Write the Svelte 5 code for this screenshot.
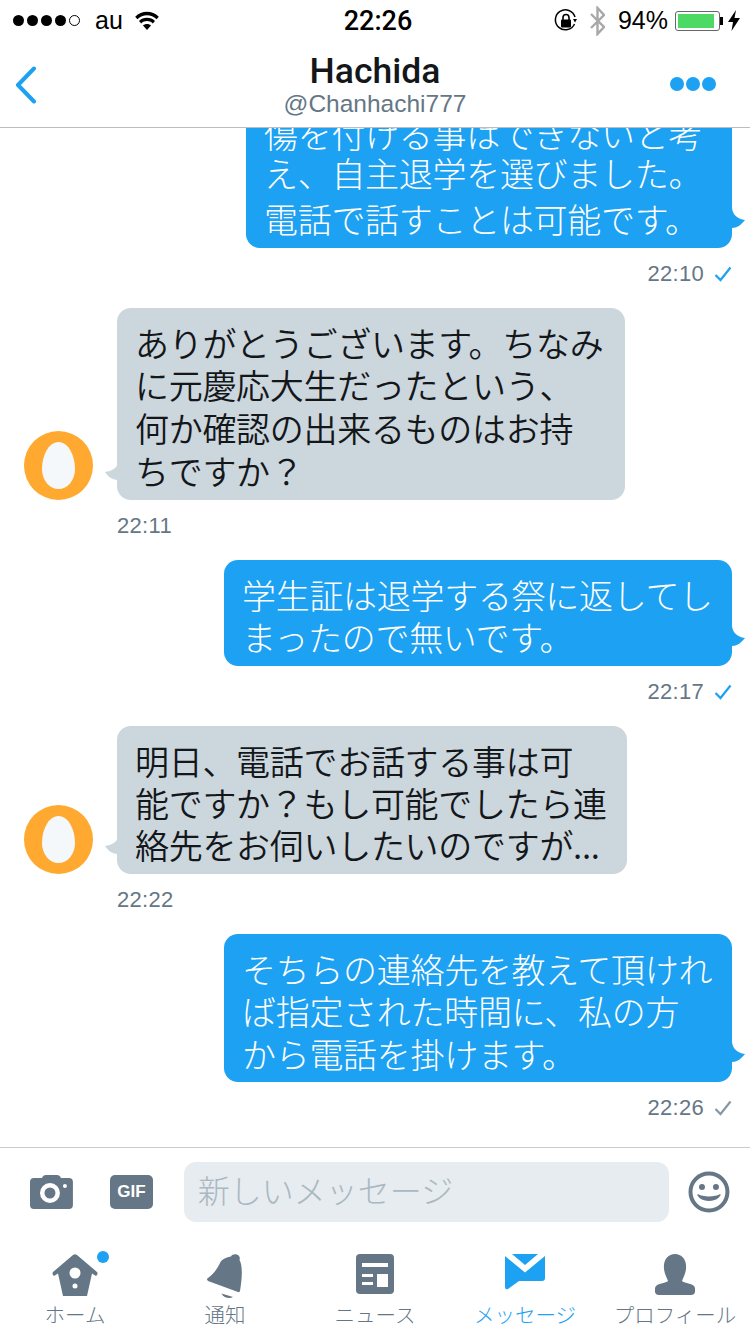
<script>
  const messages = [
    { id: 1, me: true, time: '22:10', read: true, width: 486, tight: true, lines: ['傷を付ける事はできないと考', 'え、自主退学を選びました。', '電話で話すことは可能です。'] },
    { id: 2, me: false, time: '22:11', width: 508, lines: ['ありがとうございます。ちなみ', 'に元慶応大生だったという、', '何か確認の出来るものはお持', 'ちですか？'] },
    { id: 3, me: true, time: '22:17', read: true, width: 508, lines: ['学生証は退学する祭に返してし', 'まったので無いです。'] },
    { id: 4, me: false, time: '22:22', width: 510, lines: ['明日、電話でお話する事は可', '能ですか？もし可能でしたら連', '絡先をお伺いしたいのですが...'] },
    { id: 5, me: true, time: '22:26', read: false, width: 508, lines: ['そちらの連絡先を教えて頂けれ', 'ば指定された時間に、私の方', 'から電話を掛けます。'] }
  ];
</script>

<div class="screen">
  <div class="status">
    <div class="status-left">
      <span class="signal">
        <i class="dot"></i><i class="dot"></i><i class="dot"></i><i class="dot"></i><i class="dot empty"></i>
      </span>
      <span class="carrier">au</span>
      <svg width="24" height="19" viewBox="0 0 24 19"><path d="M12 19 L8 14.5 C10 12.5 14 12.5 16 14.5 Z M6.2 12.4 L4 10 C8 5.8 16 5.8 20 10 L17.8 12.4 C14.5 9.3 9.5 9.3 6.2 12.4 Z M2.4 8.2 L0.2 5.8 C6.5 -0.8 17.5 -0.8 23.8 5.8 L21.6 8.2 C16.2 2.9 7.8 2.9 2.4 8.2 Z" fill="#000"/></svg>
    </div>
    <div class="clock">22:26</div>
    <div class="status-right">
      <svg width="24" height="24" viewBox="0 0 24 24"><path d="M20.5 15 A10 10 0 1 1 21 8" fill="none" stroke="#000" stroke-width="1.5"/><path d="M23 10 L19 10 L21 13.5 Z" fill="#000"/><rect x="7" y="10.5" width="10" height="8" rx="1" fill="#000"/><path d="M9 11 V8.5 a3 3 0 0 1 6 0 V11" fill="none" stroke="#000" stroke-width="1.6"/></svg>
      <svg class="bt" width="15" height="30" viewBox="0 0 15 30"><path d="M1 8 L14 21 L7.5 28 V2 L14 9 L1 22" fill="none" stroke="#a8a8a8" stroke-width="2.4"/></svg>
      <span class="pct">94%</span>
      <span class="battery"><span class="charge"></span></span>
      <svg class="bolt" width="12" height="21" viewBox="0 0 12 21"><path d="M8 0 L0 12 H5 L3.5 21 L12 8 H6.5 Z" fill="#000"/></svg>
    </div>
  </div>

  <header class="nav">
    <svg class="back" width="22" height="38" viewBox="0 0 22 38"><path d="M19 2.5 L3 19 L19 35.5" fill="none" stroke="#1da1f2" stroke-width="4" stroke-linecap="round" stroke-linejoin="round"/></svg>
    <div class="title">
      <div class="name">Hachida</div>
      <div class="handle">@Chanhachi777</div>
    </div>
    <div class="more"><i></i><i></i><i></i></div>
  </header>

  <main class="thread">
    {#each messages as m (m.id)}
      <div class="group" class:mine={m.me}>
        <div class="row">
          {#if !m.me}
            <div class="avatar"><span class="egg"></span></div>
          {/if}
          <div class="bubble" class:tight={m.tight} style="width: {m.width}px">
            {#each m.lines as line}
              <div>{line}</div>
            {/each}
            {#if m.me}
              <svg class="tail tail-right" width="13" height="21" viewBox="0 0 13 21"><path d="M0 0 C0 7 5 12 13 13 C9 18 5 21 0 21 Z" fill="#1da1f2"/></svg>
            {:else}
              <svg class="tail tail-left" width="13" height="17" viewBox="0 0 13 17"><path d="M13 0 C12 5 7 8 0 9 C3 14 8 17 13 17 Z" fill="#ccd6dd"/></svg>
            {/if}
          </div>
        </div>
        <div class="meta">
          <span>{m.time}</span>
          {#if m.me}
            <svg width="18" height="16" viewBox="0 0 18 16"><path d="M1.5 9 L6.5 14 L16.5 1.5" fill="none" stroke={m.read ? '#1da1f2' : '#8899a6'} stroke-width="2.2"/></svg>
          {/if}
        </div>
      </div>
    {/each}
  </main>

  <div class="composer">
    <svg width="43" height="34" viewBox="0 0 43 34"><path fill-rule="evenodd" d="M4 3 H12 Q13 0 16 0 H27 Q30 0 31 3 H39 Q43 3 43 7 V30 Q43 34 39 34 H4 Q0 34 0 30 V7 Q0 3 4 3 Z M20 8 A10 10 0 1 0 20 28 A10 10 0 1 0 20 8 Z M20 12.5 A5.5 5.5 0 1 1 20 23.500 A5.500 5.500 0 1 1 20 12.500 Z" fill="#657786"/><circle cx="35" cy="11" r="2" fill="#fff"/></svg>
    <div class="gif">GIF</div>
    <div class="input">新しいメッセージ</div>
    <svg width="42" height="42" viewBox="0 0 42 42"><circle cx="21" cy="21" r="18.500" fill="none" stroke="#657786" stroke-width="4"/><circle cx="14" cy="16" r="3" fill="#657786"/><circle cx="28" cy="16" r="3" fill="#657786"/><path d="M10 24 C14 31 28 31 32 24 C27 27 15 27 10 24 Z" fill="#657786" stroke="#657786" stroke-width="1.500" stroke-linejoin="round"/></svg>
  </div>

  <nav class="tabs">
    <div class="tab">
      <span class="icon">
        <svg width="46" height="42" viewBox="0 0 46 42"><path fill-rule="evenodd" d="M21 1 Q23 -0.500 25 1 L45 18 Q46.500 20 44 22 L40 19.500 L35 42 H11 L6 19.500 L2 22 Q-0.500 20 1 18 Z M23 13.500 A5.500 5.500 0 1 0 23 24.500 A5.500 5.500 0 1 0 23 13.500 Z M23 29.500 A2.500 2.500 0 1 0 23 34.500 A2.500 2.500 0 1 0 23 29.500 Z" fill="#657786"/></svg>
        <i class="badge"></i>
      </span>
      <span>ホーム</span>
    </div>
    <div class="tab">
      <span class="icon">
        <svg class="bell" width="36" height="45" viewBox="0 0 36 45"><path d="M1 27 Q-1 25 1 24 C8 19 11 13 13 9 C15 5 20 3 24 2.500 C25 0 30 -0.500 32 2 C33 3.500 33 5 32.500 6 C36 12 35 25 33 37 Q32.500 38.500 31 38 Z" fill="#657786"/><path d="M14.500 39.500 L26 43 C23 45 16.500 44 14.500 39.500 Z" fill="#657786"/></svg>
      </span>
      <span>通知</span>
    </div>
    <div class="tab">
      <span class="icon">
        <svg width="38" height="40" viewBox="0 0 38 40"><rect width="38" height="40" rx="4" fill="#657786"/><path d="M6 9 H32 V13 H6 Z M6 20 H17 V23 H6 Z M6 28 H17 V31 H6 Z M21 20 H32 V33 H21 Z" fill="#fff"/></svg>
      </span>
      <span>ニュース</span>
    </div>
    <div class="tab active">
      <span class="icon">
        <svg width="40" height="36" viewBox="0 0 40 36"><path d="M7 0 H33 L20 11 Z M0 2 L20 18.500 L40 2 V24 Q40 27 37 27 H14 L3 35 Q0 36 0 33 Z" fill="#1da1f2"/></svg>
      </span>
      <span>メッセージ</span>
    </div>
    <div class="tab">
      <span class="icon">
        <svg width="40" height="41" viewBox="0 0 40 41"><path d="M20 0 C27 0 32 6 31 15 C30.500 20 28 24 27 27 C29 29 36 29 39 32 Q41 35 40 38 Q39.500 41 36 41 H4 Q0.500 41 0 38 Q-1 35 1 32 C4 29 11 29 13 27 C12 24 9.500 20 9 15 C8 6 13 0 20 0 Z" fill="#657786"/></svg>
      </span>
      <span>プロフィール</span>
    </div>
  </nav>
</div>

<style>
  :global(body) {
    margin: 0;
    background: #fff;
  }

  .screen {
    width: 750px;
    height: 1334px;
    display: flex;
    flex-direction: column;
    overflow: hidden;
    background: #fff;
    font-family: "Liberation Sans", "Noto Sans CJK JP", sans-serif;
  }

  .status {
    height: 41px;
    flex: none;
    display: flex;
    align-items: center;
    justify-content: space-between;
    padding: 0 10px 0 13px;
    position: relative;
    font-size: 25px;
    color: #000;
  }

  .status-left, .status-right {
    display: flex;
    align-items: center;
  }

  .signal {
    display: flex;
    gap: 3px;
    width: 82px;
  }

  .dot {
    width: 11px;
    height: 11px;
    border-radius: 50%;
    background: #000;
    box-sizing: border-box;
  }

  .dot.empty {
    background: none;
    border: 1.5px solid #000;
  }

  .carrier {
    width: 40px;
  }

  .clock {
    position: absolute;
    left: 6px;
    right: 0;
    text-align: center;
    font-family: Roboto, sans-serif;
    font-size: 27px;
    font-weight: 500;
  }

  .bt {
    margin-left: 12px;
  }

  .pct {
    margin-left: 13px;
  }

  .battery {
    position: relative;
    margin-left: 7px;
    width: 45px;
    height: 20px;
    border: 1px solid #666;
    border-radius: 3px;
    box-sizing: border-box;
    padding: 2px;
    display: flex;
  }

  .battery::after {
    content: "";
    position: absolute;
    right: -4px;
    top: 5px;
    width: 3px;
    height: 8px;
    background: #000;
  }

  .charge {
    width: 92%;
    background: #4cd964;
  }

  .bolt {
    margin-left: 8px;
  }

  .nav {
    height: 87px;
    flex: none;
    box-sizing: border-box;
    border-bottom: 1px solid #bdbdbd;
    display: grid;
    grid-template-columns: 1fr auto 1fr;
    align-items: center;
    padding: 0 15px;
  }

  .back {
    margin-top: 1px;
  }

  .title {
    text-align: center;
    position: relative;
    top: 1px;
  }

  .name {
    font-family: Roboto, sans-serif;
    font-size: 35.5px;
    font-weight: 500;
    line-height: 38px;
    color: #14171a;
  }

  .handle {
    font-size: 24.5px;
    line-height: 28px;
    color: #657786;
  }

  .more {
    display: flex;
    gap: 2px;
    justify-self: end;
    margin-right: 19px;
  }

  .more i {
    width: 14px;
    height: 14px;
    border-radius: 50%;
    background: #1da1f2;
  }

  .thread {
    flex: 1;
    min-height: 0;
    overflow: hidden;
    display: flex;
    flex-direction: column;
    justify-content: flex-end;
    padding-bottom: 26px;
  }

  .group {
    display: flex;
    flex-direction: column;
    align-items: flex-start;
    padding-left: 24px;
    flex: none;
  }

  .group + .group {
    margin-top: 21px;
  }

  .group.mine {
    align-items: flex-end;
    padding: 0 18px 0 0;
  }

  .group:nth-child(2) .bubble {
    line-height: 42.8px;
  }

  .row {
    display: flex;
    align-items: flex-end;
    gap: 24px;
  }

  .avatar {
    width: 69px;
    height: 69px;
    border-radius: 50%;
    background: #ffa930;
    display: flex;
    align-items: center;
    justify-content: center;
  }

  .egg {
    width: 33px;
    height: 47px;
    background: #f5f8fa;
    border-radius: 50% 50% 50% 50% / 58% 58% 42% 42%;
  }

  .bubble {
    position: relative;
    box-sizing: border-box;
    padding: 14px 0 7px 18px;
    border-radius: 14px;
    background: #ccd6dd;
    color: #14171a;
    font-size: 34px;
    letter-spacing: -0.3px;
    line-height: 42.4px;
    white-space: nowrap;
    font-family: "Noto Sans CJK JP", sans-serif;
    font-weight: 350;
  }

  .mine .bubble {
    background: #1da1f2;
    color: #fff;
    font-weight: 300;
  }

  .tight div + div {
    margin-top: -4px;
  }

  .tight div:last-of-type {
    margin-top: 4px;
  }

  .tail {
    position: absolute;
  }

  .tail-right {
    right: -13px;
    bottom: 20px;
  }

  .tail-left {
    left: -12px;
    bottom: 20px;
  }

  .meta {
    display: flex;
    align-items: center;
    gap: 10px;
    height: 26px;
    margin-top: 13px;
    font-size: 22px;
    letter-spacing: 0.3px;
    color: #657786;
  }

  .group:not(.mine) .meta {
    margin-left: 93px;
  }

  .composer {
    height: 89px;
    flex: none;
    box-sizing: border-box;
    border-top: 1px solid #ccc;
    display: flex;
    align-items: center;
    padding: 0 20px 0 30px;
  }

  .gif {
    width: 43px;
    height: 34px;
    margin-left: 37px;
    border-radius: 5px;
    background: #657786;
    color: #fff;
    font-size: 17px;
    font-weight: 700;
    line-height: 34px;
    text-align: center;
  }

  .input {
    width: 486px;
    height: 60px;
    margin: 0 19px 0 31px;
    box-sizing: border-box;
    padding-left: 14px;
    border-radius: 12px;
    background: #e6ecf0;
    color: #aab8c2;
    font-family: "Noto Sans CJK JP", sans-serif;
    font-weight: 300;
    font-size: 32px;
    line-height: 54px;
  }

  .tabs {
    height: 98px;
    flex: none;
    display: flex;
  }

  .tab {
    flex: 1;
    display: flex;
    flex-direction: column;
    align-items: center;
    font-family: "Noto Sans CJK JP", sans-serif;
    font-weight: 300;
    font-size: 20.5px;
    line-height: 24px;
    color: #657786;
    white-space: nowrap;
  }

  .tab.active {
    color: #1da1f2;
  }

  .icon {
    position: relative;
    height: 66px;
    box-sizing: border-box;
    padding-top: 18px;
    display: block;
  }

  .icon svg {
    display: block;
  }

  .icon .bell {
    margin-left: -1px;
  }

  .badge {
    position: absolute;
    top: 15px;
    right: -11px;
    width: 12px;
    height: 12px;
    border-radius: 50%;
    background: #1da1f2;
  }
</style>
